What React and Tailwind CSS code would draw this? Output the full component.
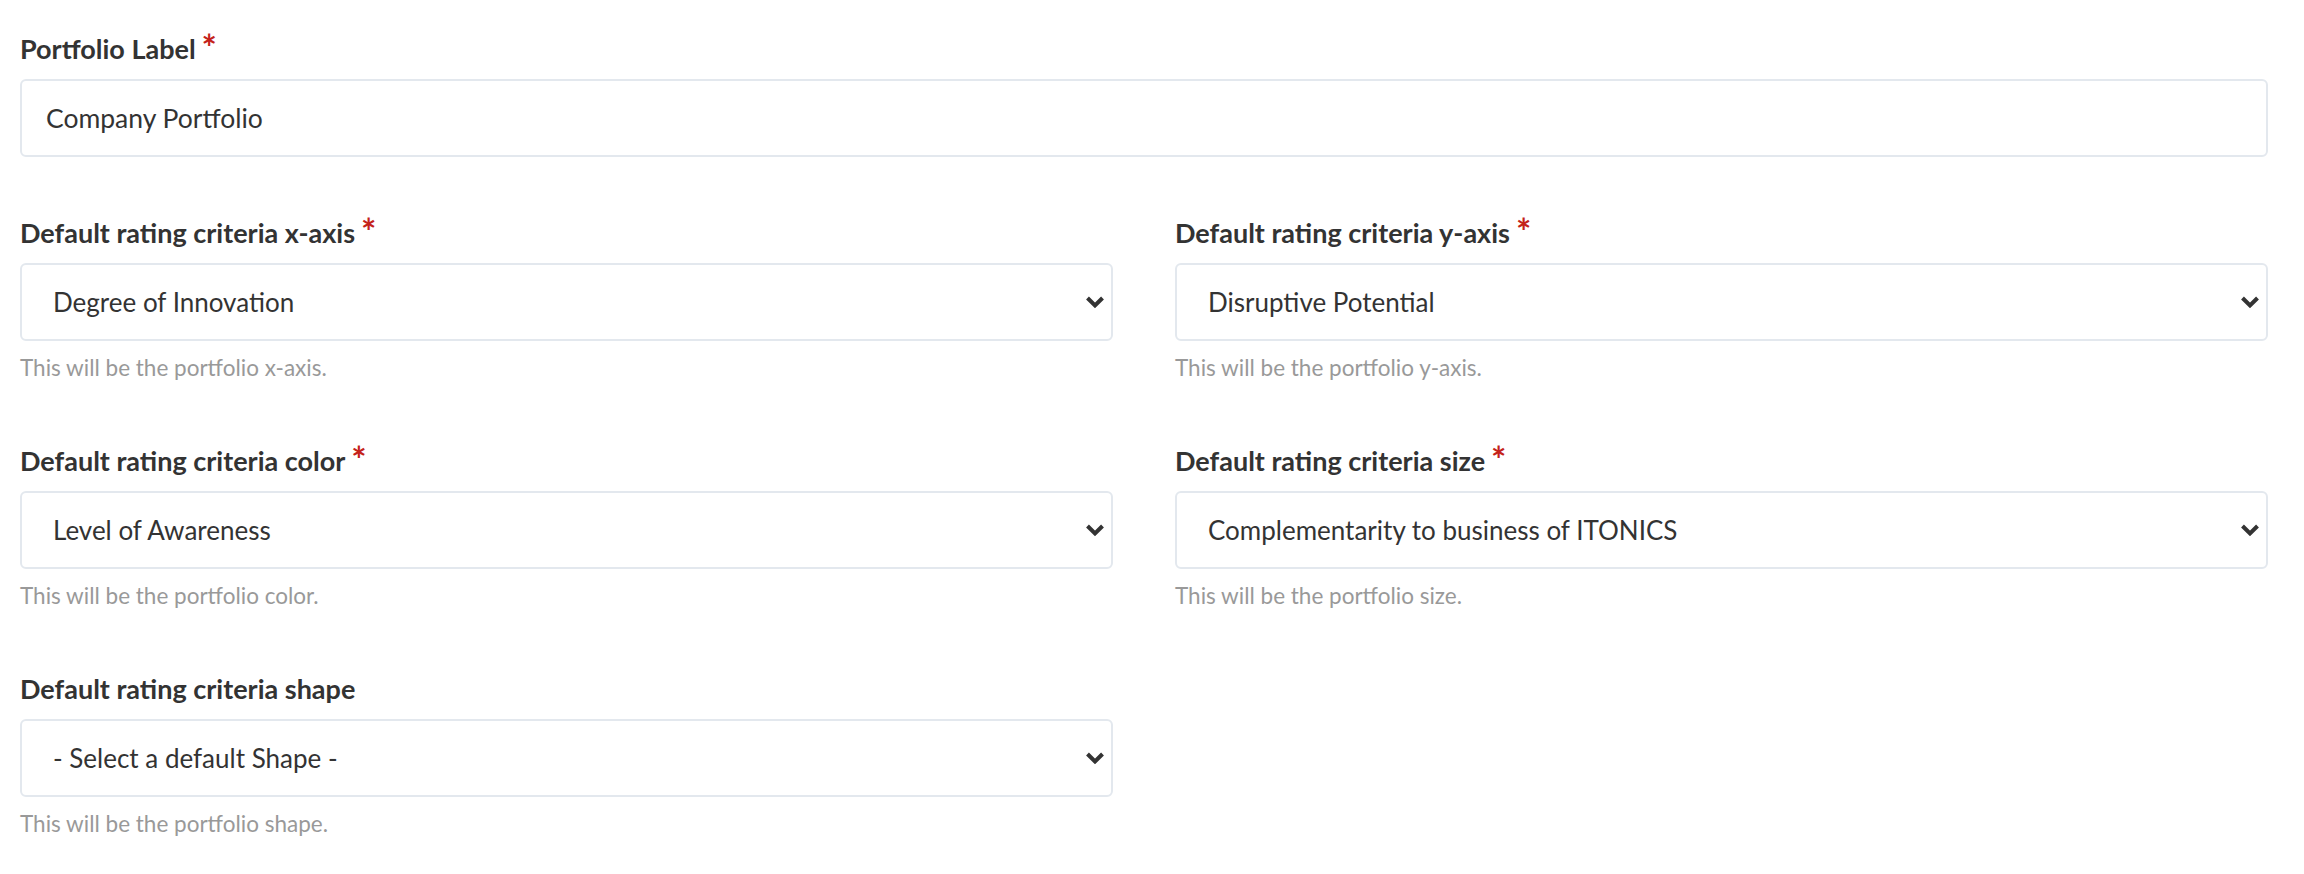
import React from "react";

const FONT = { fontFamily: '"Source Sans Pro", Lato, "Noto Sans", sans-serif' };

function Label({ children, required }) {
  return (
    <div className="flex items-start text-[27px] leading-[36px] font-bold text-[#333333] mb-[12px]">
      <span>{children}</span>
      {required && (
        <span className="relative top-[-2px] ml-[6px] text-[#c4221a] text-[36px] leading-[36px]">*</span>
      )}
    </div>
  );
}

function Chevron() {
  return (
    <svg width="20" height="13" viewBox="0 0 20 13" className="pointer-events-none absolute right-[8px] top-1/2 -translate-y-1/2">
      <path d="M2.5 2.5 L10 10 L17.5 2.5" fill="none" stroke="#333333" strokeWidth="4" strokeLinecap="butt" strokeLinejoin="miter" />
    </svg>
  );
}

function SelectField({ label, required, value, help }) {
  return (
    <div className="mb-[59px]">
      <Label required={required}>{label}</Label>
      <div className="relative">
        <select
          defaultValue={value}
          style={FONT}
          className="appearance-none w-full h-[78px] border-2 border-[#e3e8ee] rounded-[6px] bg-white pl-[31px] pr-[40px] text-[26px] text-[#333333] outline-none"
        >
          <option value={value}>{value}</option>
        </select>
        <Chevron />
      </div>
      <div className="mt-[11px] text-[22.5px] leading-[32px] text-[#999999]">{help}</div>
    </div>
  );
}

export default function App() {
  return (
    <div style={FONT} className="bg-white min-h-screen pl-[20px] pr-[36px] pt-[31px] text-[#333333]">
      <div className="mb-[58px]">
        <Label required>Portfolio Label</Label>
        <input
          defaultValue="Company Portfolio"
          style={FONT}
          className="block w-full h-[78px] border-2 border-[#e3e8ee] rounded-[6px] bg-white px-[24px] text-[26.5px] text-[#333333] outline-none"
        />
      </div>
      <div className="grid grid-cols-2 gap-x-[62px]">
        <SelectField
          label="Default rating criteria x-axis"
          required
          value="Degree of Innovation"
          help="This will be the portfolio x-axis."
        />
        <SelectField
          label="Default rating criteria y-axis"
          required
          value="Disruptive Potential"
          help="This will be the portfolio y-axis."
        />
        <SelectField
          label="Default rating criteria color"
          required
          value="Level of Awareness"
          help="This will be the portfolio color."
        />
        <SelectField
          label="Default rating criteria size"
          required
          value="Complementarity to business of ITONICS"
          help="This will be the portfolio size."
        />
        <SelectField
          label="Default rating criteria shape"
          value="- Select a default Shape -"
          help="This will be the portfolio shape."
        />
      </div>
    </div>
  );
}
